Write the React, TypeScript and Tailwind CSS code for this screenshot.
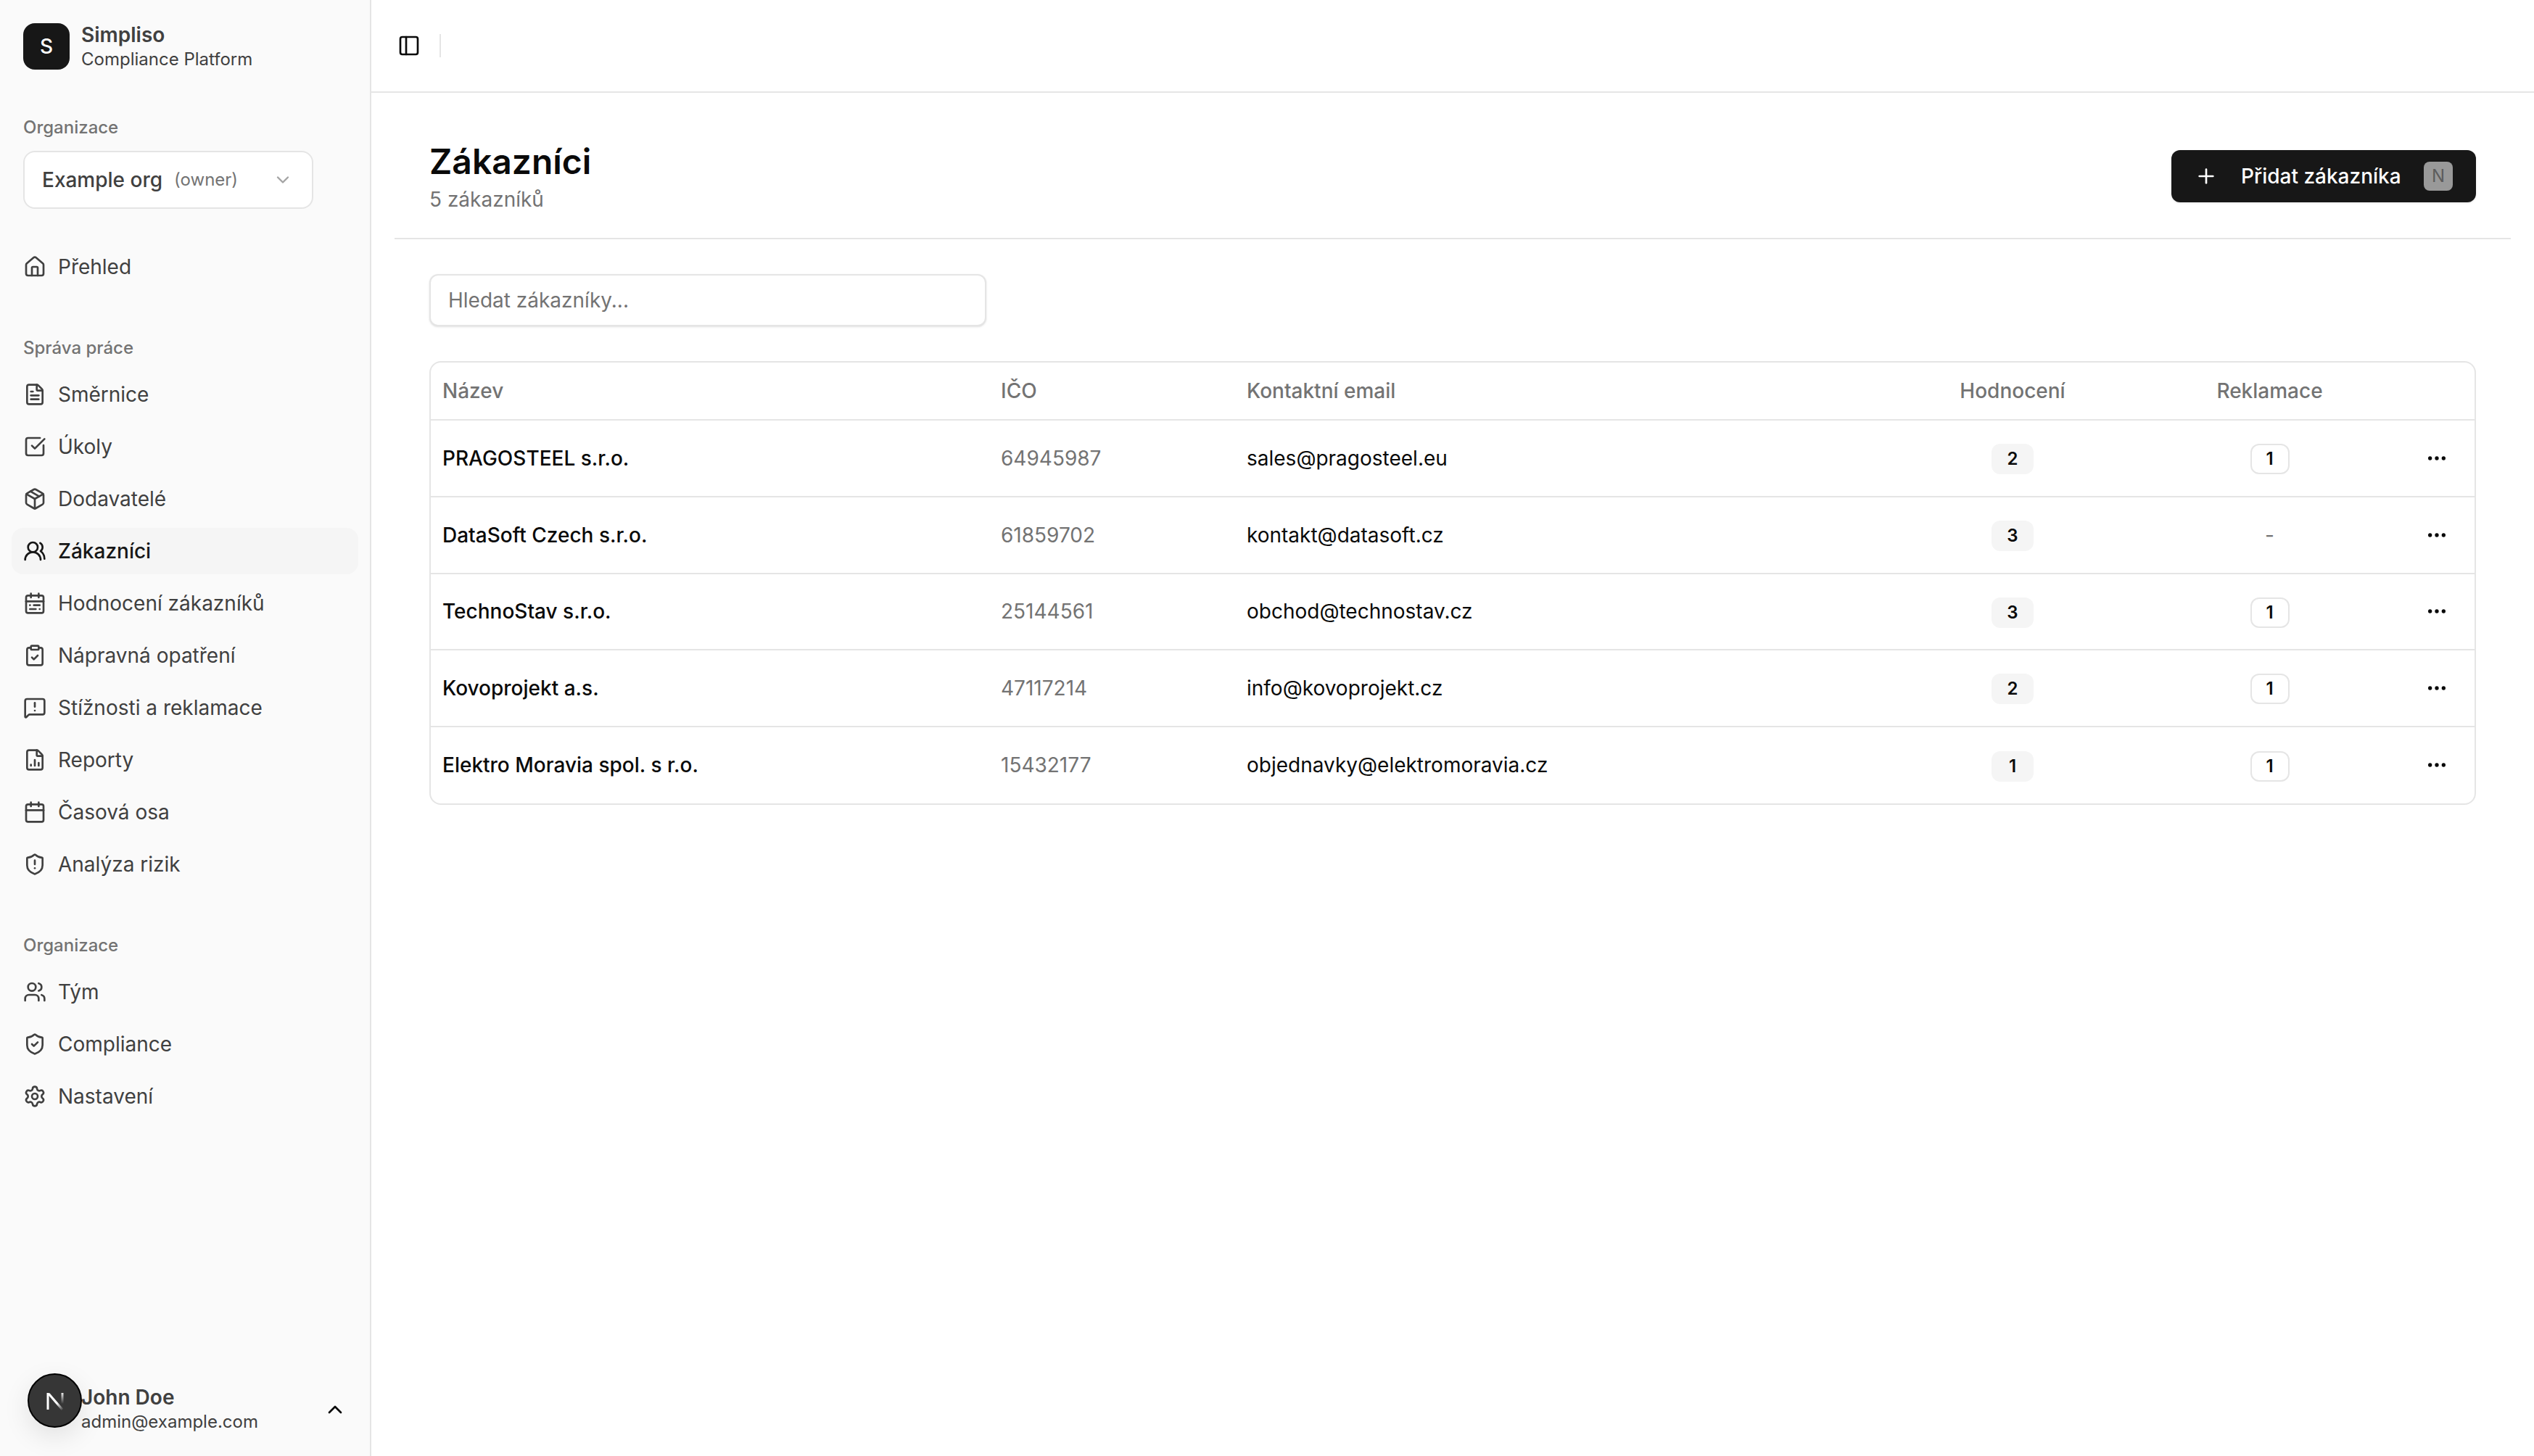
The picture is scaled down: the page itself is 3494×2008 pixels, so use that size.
import React from "react";
import {
  PanelLeft, House, FileText, SquareCheckBig, Package, UsersRound, CalendarRange, ClipboardCheck,
  MessageSquareWarning, FileChartColumn, Calendar, ShieldAlert, Users, ShieldCheck, Settings,
  ChevronDown, ChevronUp, Plus, Ellipsis,
} from "lucide-react";

const work = [
  { label: "Směrnice", icon: FileText },
  { label: "Úkoly", icon: SquareCheckBig },
  { label: "Dodavatelé", icon: Package },
  { label: "Zákazníci", icon: UsersRound, active: true },
  { label: "Hodnocení zákazníků", icon: CalendarRange },
  { label: "Nápravná opatření", icon: ClipboardCheck },
  { label: "Stížnosti a reklamace", icon: MessageSquareWarning },
  { label: "Reporty", icon: FileChartColumn },
  { label: "Časová osa", icon: Calendar },
  { label: "Analýza rizik", icon: ShieldAlert },
];
const org = [
  { label: "Tým", icon: Users },
  { label: "Compliance", icon: ShieldCheck },
  { label: "Nastavení", icon: Settings },
];
const rows = [
  { name: "PRAGOSTEEL s.r.o.", ico: "64945987", email: "sales@pragosteel.eu", rating: "2", claims: "1" },
  { name: "DataSoft Czech s.r.o.", ico: "61859702", email: "kontakt@datasoft.cz", rating: "3", claims: null },
  { name: "TechnoStav s.r.o.", ico: "25144561", email: "obchod@technostav.cz", rating: "3", claims: "1" },
  { name: "Kovoprojekt a.s.", ico: "47117214", email: "info@kovoprojekt.cz", rating: "2", claims: "1" },
  { name: "Elektro Moravia spol. s r.o.", ico: "15432177", email: "objednavky@elektromoravia.cz", rating: "1", claims: "1" },
];

function NavItem({ label, icon: Icon, active }: { label: string; icon: React.ComponentType<{ size?: number; className?: string }>; active?: boolean }) {
  return (
    <div className={`flex h-16 items-center gap-4 rounded-2xl px-4 text-[28px] ${active ? "bg-[#f5f5f5] font-medium text-[#171717]" : "text-[#404040]"}`}>
      <Icon size={32} className="shrink-0" />
      <span>{label}</span>
    </div>
  );
}

function GroupLabel({ children }: { children: React.ReactNode }) {
  return <div className="flex h-16 items-center px-4 text-[24px] font-medium text-[#737373]">{children}</div>;
}

export default function App() {
  return (
    <div className="relative flex h-[2008px] w-[3494px] overflow-hidden bg-white font-['Inter',sans-serif] text-[#0a0a0a]">
      <aside className="flex w-[512px] shrink-0 flex-col border-r-2 border-[#e5e5e5] bg-[#fafafa] pb-4 pl-4 pr-[16px] pt-8">
        <div className="flex h-16 items-center gap-4 px-4">
          <div className="flex h-16 w-16 items-center justify-center rounded-2xl bg-[#171717] text-[28px] font-medium text-white">S</div>
          <div className="flex flex-col pt-0.5 text-[#404040]">
            <span className="text-[28px] font-semibold leading-[34px]">Simpliso</span>
            <span className="text-[24px] leading-[34px]">Compliance Platform</span>
          </div>
        </div>
        <div className="mt-12">
          <GroupLabel>Organizace</GroupLabel>
          <div className="mx-4 flex h-20 w-[400px] items-center justify-between rounded-2xl border-2 border-[#e5e5e5] bg-white pl-6 pr-[26px]">
            <div className="flex items-center gap-4">
              <span className="text-[28px] font-medium text-[#404040]">Example org</span>
              <span className="text-[24px] text-[#737373]">(owner)</span>
            </div>
            <ChevronDown size={28} className="text-[#a3a3a3]" />
          </div>
        </div>
        <div className="mt-12">
          <NavItem label="Přehled" icon={House} />
        </div>
        <div className="mt-12">
          <GroupLabel>Správa práce</GroupLabel>
          <div className="flex flex-col gap-2">
            {work.map((i) => <NavItem key={i.label} {...i} />)}
          </div>
        </div>
        <div className="mt-12">
          <GroupLabel>Organizace</GroupLabel>
          <div className="flex flex-col gap-2">
            {org.map((i) => <NavItem key={i.label} {...i} />)}
          </div>
        </div>
        <div className="mt-auto flex h-24 items-center gap-4 pl-[96px] pr-4">
          <div className="flex flex-1 flex-col text-[#404040]">
            <span className="text-[28px] font-semibold leading-[34px]">John Doe</span>
            <span className="text-[24px] leading-[34px]">admin@example.com</span>
          </div>
          <ChevronUp size={32} />
        </div>
      </aside>

      <main className="flex min-w-0 flex-1 flex-col">
        <header className="flex h-[128px] shrink-0 items-center border-b-2 border-[#e5e5e5] pl-[34px]">
          <div className="flex w-9 justify-center"><PanelLeft size={32} /></div>
          <div className="ml-6 h-8 w-0.5 bg-[#e5e5e5]" />
        </header>
        <div className="mx-8 flex h-[202px] items-center justify-between border-b-2 border-[#e5e5e5] px-12 pb-[33px] pt-[63px]">
          <div>
            <h1 className="text-[48px] font-semibold leading-[64px]">Zákazníci</h1>
            <p className="text-[28px] leading-[40px] text-[#737373]">5 zákazníků</p>
          </div>
          <button className="flex h-[72px] w-[420px] items-center rounded-xl bg-[#171717] pl-8 pr-8 text-[28px] font-medium text-white shadow-sm">
            <Plus size={32} />
            <span className="ml-8">Přidat zákazníka</span>
            <span className="ml-auto flex h-10 w-10 items-center justify-center rounded-lg bg-[#999999] text-[24px] font-normal text-[#5c5c5c]">N</span>
          </button>
        </div>
        <div className="px-20 pt-12">
          <div className="flex h-[72px] w-[768px] items-center rounded-xl border-2 border-[#e5e5e5] bg-white px-6 text-[28px] text-[#737373] shadow-sm">Hledat zákazníky...</div>
          <div className="mt-12 overflow-hidden rounded-2xl border-2 border-[#e5e5e5]">
            <table className="w-full table-fixed border-collapse text-[28px]">
              <colgroup>
                <col className="w-[770px]" />
                <col className="w-[339px]" />
                <col className="w-[896px]" />
                <col className="w-[352px]" />
                <col className="w-[357px]" />
                <col className="w-[104px]" />
              </colgroup>
              <thead>
                <tr className="h-[79px] border-b-2 border-[#e5e5e5] text-[#737373]">
                  <th className="px-4 text-left font-medium">Název</th>
                  <th className="px-4 text-left font-medium">IČO</th>
                  <th className="px-4 text-left font-medium">Kontaktní email</th>
                  <th className="px-4 text-center font-medium">Hodnocení</th>
                  <th className="px-4 text-center font-medium">Reklamace</th>
                  <th />
                </tr>
              </thead>
              <tbody>
                {rows.map((r, idx) => (
                  <tr key={r.name} className={`h-[105.75px] ${idx < rows.length - 1 ? "border-b-2 border-[#e5e5e5]" : ""}`}>
                    <td className="px-4 font-medium">{r.name}</td>
                    <td className="px-4 text-[#737373]">{r.ico}</td>
                    <td className="px-4">{r.email}</td>
                    <td className="px-4 text-center">
                      <span className="inline-flex h-[42px] w-[58px] items-center justify-center rounded-xl bg-[#f5f5f5] align-middle text-[24px] font-semibold">{r.rating}</span>
                    </td>
                    <td className="px-4 text-center">
                      {r.claims ? (
                        <span className="inline-flex h-[42px] w-[54px] items-center justify-center rounded-xl border-2 border-[#e5e5e5] align-middle text-[24px] font-semibold">{r.claims}</span>
                      ) : (
                        <span className="text-[#737373]">-</span>
                      )}
                    </td>
                    <td className="text-center"><Ellipsis size={32} className="mx-auto" /></td>
                  </tr>
                ))}
              </tbody>
            </table>
          </div>
        </div>
      </main>

      <div className="absolute left-[38px] top-[1894px] flex h-[75px] w-[75px] items-center justify-center rounded-full border-2 border-black bg-[#363636] shadow-[0_12px_36px_rgba(0,0,0,0.10)]">
        <svg width="26" height="26" viewBox="0 0 26 26" fill="none">
          <defs>
            <linearGradient id="nfade" x1="6" y1="3" x2="25" y2="25" gradientUnits="userSpaceOnUse">
              <stop offset="0.55" stopColor="white" />
              <stop offset="1" stopColor="white" stopOpacity="0" />
            </linearGradient>
            <linearGradient id="nfade2" x1="23" y1="2" x2="23" y2="17" gradientUnits="userSpaceOnUse">
              <stop stopColor="white" stopOpacity="0.9" />
              <stop offset="1" stopColor="white" stopOpacity="0" />
            </linearGradient>
          </defs>
          <path d="M4 3L23 25" stroke="url(#nfade)" strokeWidth="3.2" />
          <path d="M3 25V2" stroke="white" strokeWidth="3" />
          <path d="M23 2v15" stroke="url(#nfade2)" strokeWidth="3" />
        </svg>
      </div>
    </div>
  );
}
